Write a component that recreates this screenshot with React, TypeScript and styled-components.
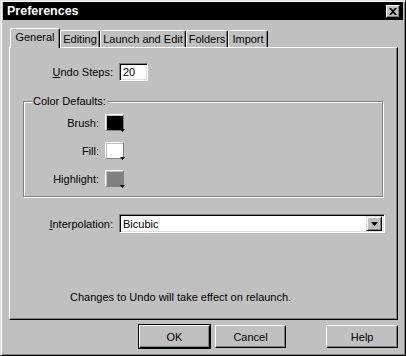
import React from "react";
import styled, { createGlobalStyle } from "styled-components";

const Global = createGlobalStyle`
  html, body { margin: 0; padding: 0; background: #c0c0c0; }
  body { font-family: "Liberation Sans", Arial, sans-serif; font-size: 11px; color: #000; }
  * { box-sizing: border-box; }
`;

const Window = styled.div`
  width: 406px;
  height: 356px;
  background: #c0c0c0;
  border-top: 1px solid #dfdfdf;
  border-left: 1px solid #dfdfdf;
  border-right: 1px solid #000;
  border-bottom: 1px solid #000;
  box-shadow: inset 1px 1px 0 #fff, inset -1px -1px 0 #808080;
  padding: 1px 2px 2px 1px;
  display: flex;
  flex-direction: column;
`;

const TitleBar = styled.div`
  height: 18px;
  margin: 0 0 0 1px;
  background: #000;
  color: #fff;
  display: flex;
  align-items: center;
  justify-content: space-between;
  padding: 0 3px 0 4px;
`;

const Title = styled.span`
  font-family: "Liberation Sans", Arial, sans-serif;
  font-weight: bold;
  font-size: 12.5px;
`;

const CloseButton = styled.div`
  width: 14px;
  height: 13px;
  background: #c0c0c0;
  border-top: 1px solid #fff;
  border-left: 1px solid #fff;
  border-right: 1px solid #000;
  border-bottom: 1px solid #000;
  box-shadow: inset -1px -1px 0 #808080;
  display: flex;
  align-items: center;
  justify-content: center;
`;

const Body = styled.div`
  flex: 1;
  display: flex;
  flex-direction: column;
  padding: 8px 5px 0 7px;
`;

const TabRow = styled.div`
  display: flex;
  align-items: flex-end;
  height: 19px;
  padding-left: 1px;
  position: relative;
  z-index: 1;
`;

const Tab = styled.div<{ $active?: boolean; $w: number }>`
  width: ${(p) => p.$w}px;
  height: ${(p) => (p.$active ? 20 : 17)}px;
  margin-bottom: ${(p) => (p.$active ? -1 : 0)}px;
  background: #c0c0c0;
  border-top: 1px solid #fff;
  border-left: 1px solid #fff;
  border-right: 1px solid #000;
  border-top-left-radius: 2px;
  border-top-right-radius: 2px;
  box-shadow: inset -1px 0 0 #808080;
  display: flex;
  align-items: center;
  justify-content: center;
  padding-bottom: ${(p) => (p.$active ? 3 : 1)}px;
  white-space: nowrap;
`;

const Panel = styled.div`
  height: 273px;
  background: #c0c0c0;
  border-top: 1px solid #fff;
  border-left: 1px solid #fff;
  border-right: 1px solid #000;
  border-bottom: 1px solid #000;
  box-shadow: inset -1px -1px 0 #808080;
  display: flex;
  flex-direction: column;
  padding: 15px 0 0 0;
`;

const Row = styled.div<{ $labelW: number; $top?: number }>`
  display: flex;
  align-items: center;
  gap: 6px;
  margin-top: ${(p) => p.$top ?? 0}px;
  & > label {
    width: ${(p) => p.$labelW}px;
    text-align: right;
  }
`;

const Label = styled.label`
  display: block;
  white-space: nowrap;
`;

const Sunken = styled.div`
  background: #fff;
  border-top: 1px solid #808080;
  border-left: 1px solid #808080;
  border-right: 1px solid #fff;
  border-bottom: 1px solid #fff;
  box-shadow: inset 1px 1px 0 #000, inset -1px -1px 0 #dfdfdf;
`;

const TextInput = styled(Sunken)`
  width: 29px;
  height: 18px;
  padding: 2px 0 0 3px;
  line-height: 13px;
`;

const Group = styled.fieldset`
  margin: 14px 14px 0 13px;
  padding: 7px 0 0 0;
  height: 102px;
  border: 1px solid #808080;
  box-shadow: 1px 1px 0 #fff, inset 1px 1px 0 #fff;
  display: flex;
  flex-direction: column;
  gap: 11px;
  min-width: 0;
`;

const Legend = styled.legend`
  padding: 0 2px 0 1px;
  margin-left: 8px;
  background: #c0c0c0;
  line-height: 12px;
`;

const Swatch = styled.div<{ $color: string }>`
  width: 19px;
  height: 17px;
  border-top: 1px solid #fff;
  border-left: 1px solid #fff;
  border-right: 1px solid #808080;
  border-bottom: 1px solid #808080;
  background: ${(p) => p.$color};
  box-shadow: inset 1px 1px 0 #c0c0c0;
  position: relative;
`;

const SwatchArrow = styled.svg`
  position: absolute;
  right: -3px;
  bottom: -3px;
`;

const Combo = styled(Sunken)`
  width: 266px;
  height: 19px;
  display: flex;
  align-items: center;
  justify-content: space-between;
  padding: 2px 2px 2px 3px;
`;

const ComboButton = styled.div`
  width: 16px;
  height: 15px;
  background: #c0c0c0;
  border-top: 1px solid #dfdfdf;
  border-left: 1px solid #dfdfdf;
  border-right: 1px solid #000;
  border-bottom: 1px solid #000;
  box-shadow: inset 1px 1px 0 #fff, inset -1px -1px 0 #808080;
  display: flex;
  align-items: center;
  justify-content: center;
`;

const Note = styled.div`
  margin-top: auto;
  margin-bottom: 16px;
  padding-left: 60px;
`;

const ButtonRow = styled.div`
  display: flex;
  gap: 5px;
  padding: 5px 0 0 130px;
`;

const Button = styled.div<{ $push?: boolean; $default?: boolean }>`
  width: ${(p) => (p.$default ? 71 : 72)}px;
  height: 23px;
  margin-left: ${(p) => (p.$push ? 35 : 0)}px;
  background: #c0c0c0;
  border-top: 1px solid #fff;
  border-left: 1px solid #fff;
  border-right: 1px solid #000;
  border-bottom: 1px solid #000;
  box-shadow: inset -1px -1px 0 #808080;
  outline: ${(p) => (p.$default ? "1px solid #000" : "none")};
  display: flex;
  align-items: center;
  justify-content: center;
`;

const Arrow = () => (
  <svg width="7" height="4" viewBox="0 0 7 4">
    <path d="M0 0h7L3.5 4z" fill="#000" />
  </svg>
);

const ColorRow = ({ label, color }: { label: string; color: string }) => (
  <Row $labelW={75}>
    <Label>{label}</Label>
    <Swatch $color={color}>
      <SwatchArrow width="6" height="4" viewBox="0 0 6 4">
        <path d="M0 0h5L2.5 3z" fill="#000" />
      </SwatchArrow>
    </Swatch>
  </Row>
);

export default function App() {
  return (
    <>
      <Global />
      <Window>
        <TitleBar>
          <Title>Preferences</Title>
          <CloseButton>
            <svg width="8" height="7" viewBox="0 0 8 7">
              <path d="M0 0h2l2 2 2-2h2L5 3.5 8 7H6L4 5 2 7H0l3-3.5z" fill="#000" />
            </svg>
          </CloseButton>
        </TitleBar>
        <Body>
          <TabRow>
            <Tab $active $w={50}>General</Tab>
            <Tab $w={40}>Editing</Tab>
            <Tab $w={86}>Launch and Edit</Tab>
            <Tab $w={42}>Folders</Tab>
            <Tab $w={40}>Import</Tab>
          </TabRow>
          <Panel>
            <Row $labelW={103}>
              <Label>
                <u>U</u>ndo Steps:
              </Label>
              <TextInput>20</TextInput>
            </Row>
            <Group>
              <Legend>Color Defaults:</Legend>
              <ColorRow label="Brush:" color="#000" />
              <ColorRow label="Fill:" color="#fff" />
              <ColorRow label="Highlight:" color="#808080" />
            </Group>
            <Row $labelW={103} $top={17}>
              <Label>
                <u>I</u>nterpolation:
              </Label>
              <Combo>
                <span>Bicubic</span>
                <ComboButton>
                  <Arrow />
                </ComboButton>
              </Combo>
            </Row>
            <Note>Changes to Undo will take effect on relaunch.</Note>
          </Panel>
          <ButtonRow>
            <Button $default>OK</Button>
            <Button>Cancel</Button>
            <Button $push>Help</Button>
          </ButtonRow>
        </Body>
      </Window>
    </>
  );
}
